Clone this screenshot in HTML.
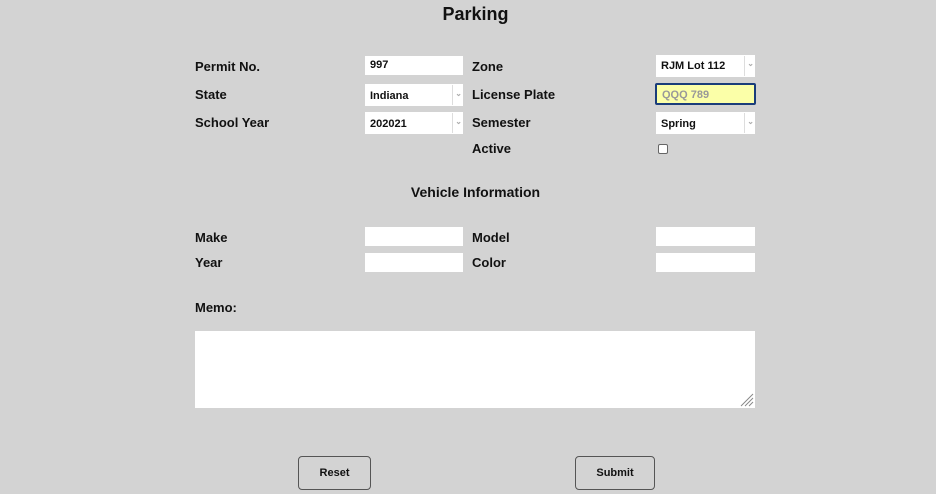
<!DOCTYPE html>
<html><head><style>
body{margin:0;width:936px;height:494px;background:#d3d3d3;font-family:"Liberation Sans",sans-serif;position:relative;overflow:hidden}
.a{position:absolute}
.l{position:absolute;font-weight:bold;font-size:13px;color:#111}
.i{position:absolute;background:#fff;font-size:11px;font-weight:bold;color:#111;box-sizing:border-box;padding-left:5px}
.s::after{content:"";position:absolute;right:0;top:1px;bottom:1px;width:10px;border-left:1px solid #ddd;background:#fff}
.s::before{content:"⌄";position:absolute;right:1px;top:-2px;font-size:8px;color:#aaa;z-index:2}
.b{position:absolute;border:1px solid #555;border-radius:4px;font-size:11px;font-weight:bold;text-align:center;box-sizing:border-box;color:#111}
</style></head><body>
<div class="a" style="left:0;width:951px;top:4px;text-align:center;font-size:18px;font-weight:bold;color:#111">Parking</div>
<div class="l" style="left:195px;top:59px">Permit No.</div>
<div class="l" style="left:195px;top:87px">State</div>
<div class="l" style="left:195px;top:115px">School Year</div>
<div class="l" style="left:472px;top:59px">Zone</div>
<div class="l" style="left:472px;top:87px">License Plate</div>
<div class="l" style="left:472px;top:115px">Semester</div>
<div class="l" style="left:472px;top:141px">Active</div>
<div class="i" style="left:365px;top:56px;width:98px;height:19px;line-height:19px">997</div>
<div class="i s" style="left:365px;top:84px;width:98px;height:22px;line-height:24px">Indiana</div>
<div class="i s" style="left:365px;top:112px;width:98px;height:22px;line-height:24px">202021</div>
<div class="i s" style="left:656px;top:55px;width:99px;height:22px;line-height:22px">RJM Lot 112</div>
<div class="i" style="left:655px;top:83px;width:101px;height:22px;line-height:20px;background:#fbffa8;border:2px solid #1a3d7a;border-radius:2px;color:#999;font-weight:bold;padding-left:5px">QQQ 789</div>
<div class="i s" style="left:656px;top:112px;width:99px;height:22px;line-height:24px">Spring</div>
<div class="a" style="left:658px;top:144px;width:8px;height:8px;background:#fff;border:1px solid #666;border-radius:2px"></div>
<div class="a" style="left:0;width:951px;top:184px;text-align:center;font-size:14px;font-weight:bold;color:#111">Vehicle Information</div>
<div class="l" style="left:195px;top:230px">Make</div>
<div class="l" style="left:195px;top:255px">Year</div>
<div class="l" style="left:472px;top:230px">Model</div>
<div class="l" style="left:472px;top:255px">Color</div>
<div class="i" style="left:365px;top:227px;width:98px;height:19px"></div>
<div class="i" style="left:365px;top:253px;width:98px;height:19px"></div>
<div class="i" style="left:656px;top:227px;width:99px;height:19px"></div>
<div class="i" style="left:656px;top:253px;width:99px;height:19px"></div>
<div class="l" style="left:195px;top:300px">Memo:</div>
<div class="i" style="left:195px;top:331px;width:560px;height:77px"></div>
<svg class="a" style="left:740px;top:393px" width="14" height="14"><path d="M13 1L1 13M13 5L5 13M13 9L9 13" stroke="#888" stroke-width="1"/></svg>
<div class="b" style="left:298px;top:456px;width:73px;height:34px;line-height:32px">Reset</div>
<div class="b" style="left:575px;top:456px;width:80px;height:34px;line-height:32px">Submit</div>
</body></html>
